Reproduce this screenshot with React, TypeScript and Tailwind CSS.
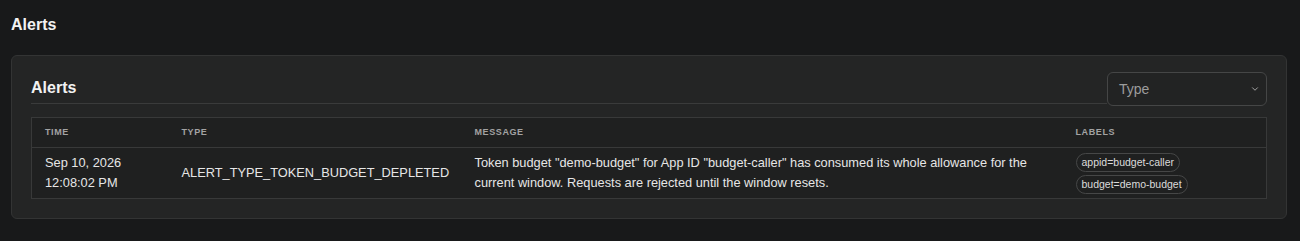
import { ChevronDown } from "lucide-react";

const labels = ["appid=budget-caller", "budget=demo-budget"];

export default function App() {
  return (
    <div
      className="min-h-[241px] bg-[#18191a] pt-[14px] pr-[13px] pb-[21px] pl-[11px] text-[#e6e6e6]"
      style={{ fontFamily: '"Liberation Sans", Arial, sans-serif' }}
    >
      <h1 className="text-[16px] leading-[22px] font-bold text-[#f2f2f2]">Alerts</h1>

      <div className="mt-[19px] rounded-[6px] border border-[#333434] bg-[#242525] px-[19px] pt-4 pb-[19px]">
        <div className="flex items-start">
          <div className="flex h-[32px] flex-1 items-center border-b border-[#3a3b3b]">
            <h2 className="text-[16px] font-bold text-[#f2f2f2]">Alerts</h2>
          </div>
          <div className="flex h-[34px] w-[160px] items-center justify-between rounded-[6px] border border-[#454646] bg-[#222323] pr-[6px] pl-[11px]">
            <span className="text-[14px] text-[#9c9c9c]">Type</span>
            <ChevronDown size={10} strokeWidth={2} className="text-[#bdbdbd]" />
          </div>
        </div>

        <table className="mt-[11px] w-full table-fixed border-collapse border border-[#383939] bg-[#1f2020] text-left">
          <colgroup>
            <col className="w-[137px]" />
            <col className="w-[293px]" />
            <col className="w-[601px]" />
            <col />
          </colgroup>
          <thead>
            <tr className="h-[30px] border-b border-[#383939]">
              {["Time", "Type", "Message", "Labels"].map((h) => (
                <th
                  key={h}
                  className="px-[13px] text-[9px] font-bold tracking-[0.6px] text-[#a3a3a3] uppercase"
                >
                  {h}
                </th>
              ))}
            </tr>
          </thead>
          <tbody>
            <tr className="h-[51px] text-[12.8px] leading-[20px]">
              <td className="px-[13px] align-middle">
                <div>Sep 10, 2026</div>
                <div>12:08:02 PM</div>
              </td>
              <td className="px-[13px] align-middle">ALERT_TYPE_TOKEN_BUDGET_DEPLETED</td>
              <td className="px-[13px] align-middle">
                Token budget "demo-budget" for App ID "budget-caller" has consumed its whole allowance for the
                current window. Requests are rejected until the window resets.
              </td>
              <td className="px-[13px] align-middle">
                <div className="flex flex-col items-start gap-[3px]">
                  {labels.map((l) => (
                    <span
                      key={l}
                      className="rounded-full border border-[#464747] px-[5px] text-[10.5px] leading-[17px] text-[#dcdcdc]"
                    >
                      {l}
                    </span>
                  ))}
                </div>
              </td>
            </tr>
          </tbody>
        </table>
      </div>
    </div>
  );
}
